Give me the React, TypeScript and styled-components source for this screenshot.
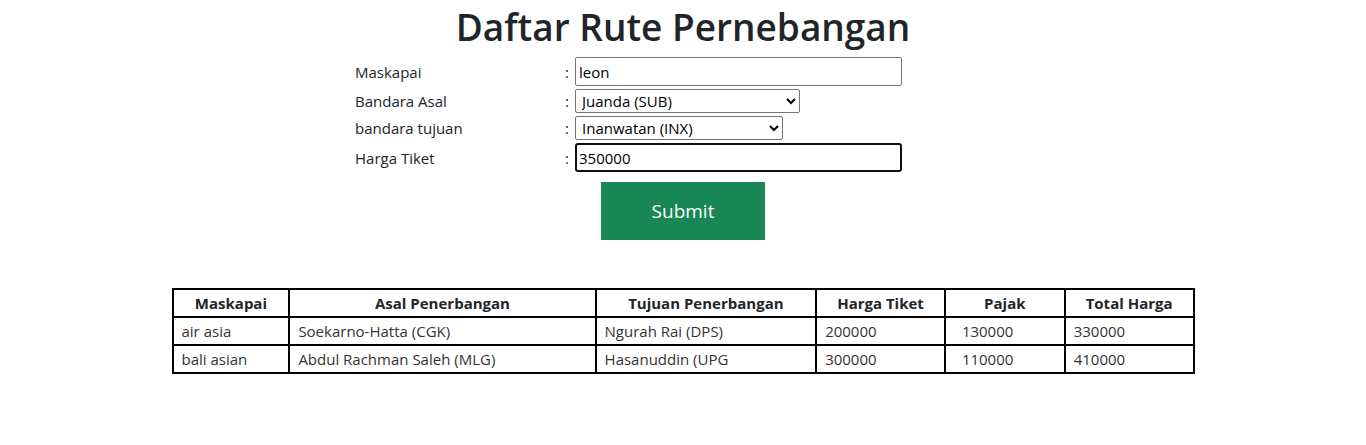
import React from "react";
import styled, { createGlobalStyle } from "styled-components";

const GlobalStyle = createGlobalStyle`
  body {
    margin: 0;
    background: #fff;
    color: #212529;
    font-family: "Open Sans", "Noto Sans", sans-serif;
    font-size: 15px;
  }
`;

const Page = styled.div`
  display: flex;
  flex-direction: column;
  align-items: center;
`;

const Title = styled.h1`
  margin: 0;
  padding-top: 2px;
  font-size: 37px;
  font-weight: 600;
  line-height: 50px;
  color: #212529;
`;

const Form = styled.form`
  width: 656px;
  display: grid;
  grid-template-columns: 210px 10px 1fr;
  row-gap: 3px;
  align-items: center;
  margin-top: 5px;
`;

const Label = styled.label`
  font-size: 15px;
`;

const Colon = styled.span`
  font-size: 15px;
`;

const Field = styled.div`
  display: flex;
`;

const TextInput = styled.input<{ $focused?: boolean }>`
  box-sizing: border-box;
  width: 327px;
  height: 29px;
  padding: ${(p) => (p.$focused ? "0 2px" : "1px 3px")};
  font-family: "Open Sans", "Noto Sans", sans-serif;
  font-size: 15px;
  color: #000;
  border: ${(p) => (p.$focused ? "2px solid #101010" : "1px solid #767676")};
  border-radius: ${(p) => (p.$focused ? 3 : 2)}px;
  outline: none;
`;

const Select = styled.select<{ $w: number }>`
  box-sizing: border-box;
  width: ${(p) => p.$w}px;
  height: 24px;
  font-family: "Open Sans", "Noto Sans", sans-serif;
  font-size: 15px;
  color: #000;
  border: 1px solid #767676;
  border-radius: 2px;
  background: #fff;
  padding: 0 2px;
`;

const SubmitButton = styled.button`
  margin-top: 10px;
  width: 164px;
  height: 58px;
  border: none;
  border-radius: 0;
  background: #198754;
  color: #fff;
  font-family: "Open Sans", "Noto Sans", sans-serif;
  font-size: 19px;
  cursor: pointer;
`;

const Table = styled.table`
  margin-top: 48px;
  width: 1023px;
  border-collapse: collapse;
  font-size: 15px;
`;

const Th = styled.th`
  border: 2px solid #000;
  height: 26px;
  padding: 0 8px;
  font-weight: 700;
  text-align: center;
`;

const Td = styled.td<{ $indent?: boolean }>`
  border: 2px solid #000;
  height: 26px;
  padding: 0 8px 0 ${(p) => (p.$indent ? 16 : 8)}px;
  color: #333;
`;

const routes = [
  {
    maskapai: "air asia",
    asal: "Soekarno-Hatta (CGK)",
    tujuan: "Ngurah Rai (DPS)",
    harga: 200000,
    pajak: 130000,
  },
  {
    maskapai: "bali asian",
    asal: "Abdul Rachman Saleh (MLG)",
    tujuan: "Hasanuddin (UPG",
    harga: 300000,
    pajak: 110000,
  },
];

const widths = [117, 307, 221, 129, 120, 129];

export default function App() {
  return (
    <Page>
      <GlobalStyle />
      <Title>Daftar Rute Pernebangan</Title>
      <Form onSubmit={(e) => e.preventDefault()}>
        <Label>Maskapai</Label>
        <Colon>:</Colon>
        <Field>
          <TextInput type="text" defaultValue="leon" />
        </Field>
        <Label>Bandara Asal</Label>
        <Colon>:</Colon>
        <Field>
          <Select $w={225} defaultValue="SUB">
            <option value="SUB">Juanda (SUB)</option>
          </Select>
        </Field>
        <Label>bandara tujuan</Label>
        <Colon>:</Colon>
        <Field>
          <Select $w={208} defaultValue="INX">
            <option value="INX">Inanwatan (INX)</option>
          </Select>
        </Field>
        <Label>Harga Tiket</Label>
        <Colon>:</Colon>
        <Field>
          <TextInput type="text" defaultValue="350000" $focused />
        </Field>
      </Form>
      <SubmitButton type="button">Submit</SubmitButton>
      <Table>
        <colgroup>
          {widths.map((w, i) => (
            <col key={i} style={{ width: w }} />
          ))}
        </colgroup>
        <thead>
          <tr>
            <Th>Maskapai</Th>
            <Th>Asal Penerbangan</Th>
            <Th>Tujuan Penerbangan</Th>
            <Th>Harga Tiket</Th>
            <Th>Pajak</Th>
            <Th>Total Harga</Th>
          </tr>
        </thead>
        <tbody>
          {routes.map((r) => (
            <tr key={r.maskapai}>
              <Td>{r.maskapai}</Td>
              <Td>{r.asal}</Td>
              <Td>{r.tujuan}</Td>
              <Td>{r.harga}</Td>
              <Td $indent>{r.pajak}</Td>
              <Td>{r.harga + r.pajak}</Td>
            </tr>
          ))}
        </tbody>
      </Table>
    </Page>
  );
}
